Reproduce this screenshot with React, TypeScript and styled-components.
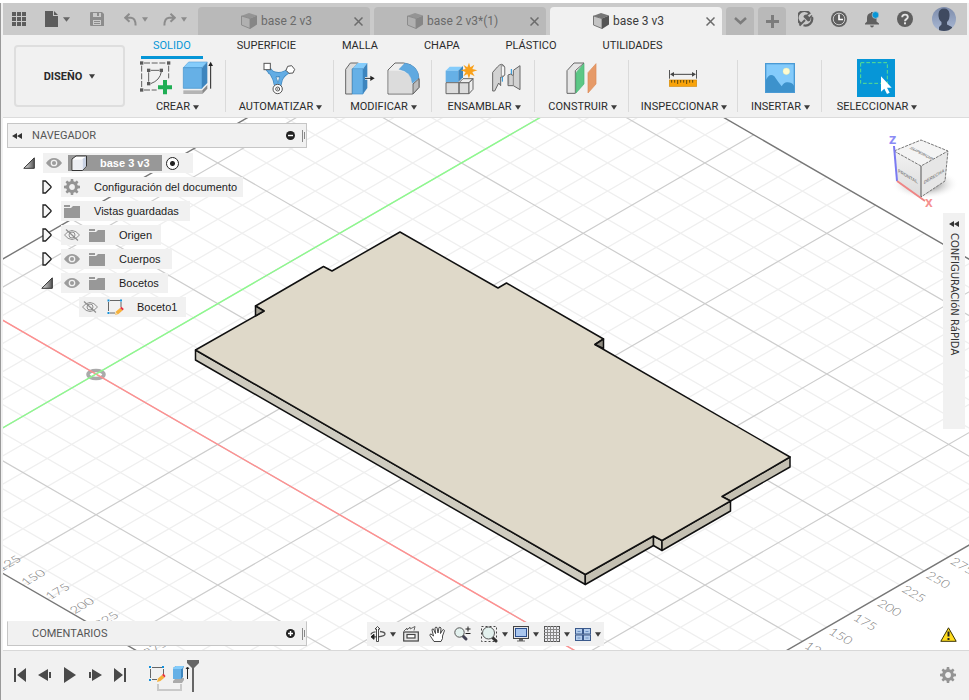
import React from "react";
import styled, { createGlobalStyle } from "styled-components";

const UI = `Roboto, "Liberation Sans", sans-serif`;
const TREE = `"Liberation Sans", Arial, sans-serif`;
const BLUE = "#0696d7";

const GlobalStyle = createGlobalStyle`
  * { box-sizing: border-box; }
  body { margin: 0; background: #fff; font-family: ${UI}; font-size: 11px; color: #2b2b2b; overflow: hidden; }
  button { font: inherit; color: inherit; background: none; border: 0; padding: 0; margin: 0; cursor: pointer; }
  svg { display: block; flex: none; }
`;

const Page = styled.div`
  display: flex;
  flex-direction: column;
  height: 100vh;
  padding-top: 3px;
  background: #fff;
`;
const Frame = styled.div`
  display: flex;
  flex-direction: column;
  flex: 1;
  min-height: 0;
  border-left: 1px solid #999;
  padding-left: 2px;
  background: #f1f1f1;
`;

/* ---------- Title bar ---------- */
const TitleBar = styled.header`
  display: flex;
  height: 32px;
  background: #cacaca;
  margin-right: 2px;
`;
const QuickTools = styled.div`
  display: flex;
  align-items: center;
  width: 195px;
  padding-left: 8px;
`;
const IconButton = styled.button<{ $w?: number; $ml?: number }>`
  display: flex;
  align-items: center;
  justify-content: center;
  gap: 5px;
  flex: none;
  width: ${(p) => (p.$w ? `${p.$w}px` : "auto")};
  margin-left: ${(p) => p.$ml ?? 0}px;
`;
const FileTabs = styled.div`
  display: flex;
  align-items: flex-end;
  gap: 4px;
`;
const FileTab = styled.div<{ $active?: boolean }>`
  display: flex;
  align-items: center;
  width: 172px;
  height: 28px;
  padding: 0 7px 0 43px;
  border-radius: 4px 4px 0 0;
  background: ${(p) => (p.$active ? "#f1f1f1" : "#b9b9b9")};
  color: ${(p) => (p.$active ? "#3c3c3c" : "#6a6a6a")};
  font-size: 12px;
`;
const TabTitle = styled.button<{ $wide?: boolean }>`
  display: flex;
  align-items: center;
  gap: 4px;
  margin-left: ${(p) => (p.$wide ? -10 : 0)}px;
  margin-right: auto;
  white-space: nowrap;
`;
const SquareButton = styled.button`
  display: flex;
  align-items: center;
  justify-content: center;
  width: 28px;
  height: 28px;
  border-radius: 4px 4px 0 0;
  background: #b9b9b9;
`;
const Account = styled.div`
  display: flex;
  align-items: center;
  gap: 17px;
  margin-left: auto;
  padding-right: 11px;
`;

/* ---------- Ribbon ---------- */
const Ribbon = styled.section`
  display: flex;
  flex: none;
  height: 83px;
  border-bottom: 1px solid #dcdcdc;
`;
const WorkspaceButton = styled.button`
  display: flex;
  align-items: center;
  justify-content: center;
  gap: 7px;
  flex: none;
  width: 111px;
  height: 62px;
  margin: 10px 3px 0 11px;
  border: 2px solid #dedede;
  border-radius: 4px;
  font-weight: 700;
`;
const RibbonBody = styled.div`
  flex: 1;
`;
const RibbonTabs = styled.nav`
  display: flex;
  gap: 22px;
  height: 24px;
  padding-left: 13px;
`;
const RibbonTab = styled.button<{ $active?: boolean }>`
  height: 24px;
  padding: 1px 12px 0;
  line-height: 20px;
  white-space: nowrap;
  color: ${(p) => (p.$active ? BLUE : "#2b2b2b")};
  border-bottom: 3px solid ${(p) => (p.$active ? BLUE : "transparent")};
`;
const Groups = styled.div`
  display: flex;
`;
const Group = styled.div<{ $w: number; $last?: boolean }>`
  display: flex;
  flex-direction: column;
  align-items: center;
  width: ${(p) => p.$w}px;
  height: 52px;
  margin-top: 1px;
  border-right: ${(p) => (p.$last ? "0" : "1px solid #dadada")};
`;
const GroupIcons = styled.div<{ $gap?: number }>`
  display: flex;
  align-items: center;
  justify-content: center;
  flex: none;
  gap: ${(p) => p.$gap ?? 10}px;
  height: 36px;
  button { display: flex; }
`;
const GroupLabel = styled.button`
  display: flex;
  align-items: center;
  flex: none;
  gap: 3px;
  height: 14px;
  margin-top: 4px;
  padding-left: 2px;
  line-height: 14px;
  white-space: nowrap;
`;

/* ---------- Viewport ---------- */
const Viewport = styled.main`
  position: relative;
  flex: 1;
  min-height: 0;
  display: flex;
  flex-direction: column;
  justify-content: space-between;
  overflow: hidden;
  background: #fff;
`;
const Scene = styled.svg`
  position: absolute;
  inset: 0;
  width: 100%;
  height: 100%;
`;
const Overlay = styled.div`
  position: relative;
  display: flex;
  align-items: flex-start;
`;
const BottomOverlay = styled(Overlay)`
  align-items: flex-end;
  padding: 0 12px 4px 4px;
`;
const Browser = styled.aside`
  width: 300px;
  margin: 5px 0 0 4px;
`;
const PanelBar = styled.div<{ $open?: boolean }>`
  display: flex;
  align-items: center;
  width: 300px;
  height: 25px;
  padding: 0 0 0 4px;
  background: #f1f1f1;
  border: 1px solid #c6c6c6;
  border-top-color: ${(p) => (p.$open ? "#c6c6c6" : "#f1f1f1")};
  color: #555;
`;
const PanelTitle = styled.h2`
  margin: 0 auto 0 8px;
  font-size: 11px;
  font-weight: 400;
`;
const CollapseSlot = styled.span`
  display: flex;
  width: 12px;
`;
const Tree = styled.ul`
  list-style: none;
  margin: 3px 0 0;
  padding: 0;
  font: 11px ${TREE};
`;
const TreeRow = styled.li<{ $indent: number }>`
  display: flex;
  align-items: center;
  height: 24px;
  padding-left: ${(p) => p.$indent}px;
`;
const Twisty = styled.button`
  display: flex;
  width: 20px;
`;
const NodeBox = styled.div<{ $pr: number }>`
  display: flex;
  align-items: center;
  height: 20px;
  padding: 0 ${(p) => p.$pr}px 0 2px;
  background: #f1f1f1;
  white-space: nowrap;
  color: #1c1c1c;
`;
const IconCell = styled.span<{ $tight?: boolean }>`
  display: flex;
  justify-content: center;
  width: 18px;
  margin-right: ${(p) => (p.$tight ? 5 : 7)}px;
`;
const NodeName = styled.span`
  margin-left: 6px;
`;
const RootName = styled.span`
  display: flex;
  align-items: center;
  gap: 13px;
  height: 16px;
  width: 94px;
  padding-left: 3px;
  background: #989898;
  color: #fff;
  font-weight: 700;
`;
const RootRadio = styled.input`
  appearance: none;
  width: 13px;
  height: 13px;
  margin: 0 0 0 4px;
  border: 1px solid #222;
  border-radius: 50%;
  background: radial-gradient(circle, #222 0 2px, #fff 3px);
`;
const TwistySlot = styled.span`
  display: flex;
  margin-left: 1px;
`;
const RightSide = styled.div`
  display: flex;
  flex-direction: column;
  align-items: flex-end;
  margin-left: auto;
  padding-top: 14px;
`;
const QuickSetup = styled.button`
  display: flex;
  align-items: center;
  gap: 6px;
  width: 22px;
  height: 216px;
  margin: 5px 4px 0 0;
  padding-top: 8px;
  background: #f1f1f1;
  flex-direction: column;
  color: #333;
`;
const VerticalText = styled.span`
  writing-mode: vertical-rl;
  font: 10px/14px "DejaVu Sans", sans-serif;
  white-space: nowrap;
`;
const NavBar = styled.div`
  display: flex;
  align-items: center;
  width: 237px;
  height: 24px;
  margin-left: 60px;
  padding-left: 2px;
  background: #f1f1f1;
`;
const NavTool = styled(IconButton)`
  gap: 4px;
`;
const Alert = styled.button`
  display: flex;
  margin: 0 0 4px auto;
`;

/* ---------- Timeline ---------- */
const Timeline = styled.footer`
  display: flex;
  align-items: flex-start;
  flex: none;
  height: 50px;
  padding: 8px 13px 0 9px;
  border-top: 1px solid #d8d8d8;
`;
const Playback = styled.div`
  display: flex;
  align-items: center;
  height: 32px;
  gap: 9px;
  button { display: flex; justify-content: center; width: 16px; }
`;
const Features = styled.div`
  margin-left: 20px;
`;
const SettingsButton = styled.button`
  display: flex;
  margin: 8px 0 0 auto;
`;

/* ---------- Icons ---------- */
const Caret = ({ w = 6, color = "#3c3c3c" }: { w?: number; color?: string }) => (
  <svg width={w} height="5" viewBox="0 0 6 5" preserveAspectRatio="none"><path d="M0 0.3H6L3 4.8Z" fill={color} /></svg>
);
const GridIcon = () => (
  <svg width="14" height="14" viewBox="0 0 14 14" fill="#5c5c5c">
    {[0, 5, 10].map((y) => [0, 5, 10].map((x) => <rect key={`${x}-${y}`} x={x} y={y} width="4" height="4" />))}
  </svg>
);
const FileIcon = () => (
  <svg width="13" height="16" viewBox="0 0 13 16" fill="#5c5c5c"><path d="M0 0H8V5H13V16H0Z" /><path d="M9 0L13 4H9Z" /></svg>
);
const SaveIcon = () => (
  <svg width="14" height="14" viewBox="0 0 14 14">
    <path d="M1 0H12L14 2V14H1Q0 14 0 13V1Q0 0 1 0Z" fill="#8c8c8c" />
    <path d="M3 1H11V5H3ZM3 8H11V13H3Z" fill="#cacaca" />
    <path d="M7 1H9V4H7ZM4 9H10V10H4ZM4 11H10V12H4Z" fill="#8c8c8c" />
  </svg>
);
const UndoIcon = ({ flip }: { flip?: boolean }) => (
  <svg width="13" height="13" viewBox="0 0 13 13" fill="none" stroke="#8c8c8c" strokeWidth="2">
    <g transform={flip ? "matrix(-1 0 0 1 13 0)" : undefined}>
      <path d="M5.5 0.8L1.2 4.8L5.5 8.8M1.5 4.8H7Q11.5 5 11.6 12.5" />
    </g>
  </svg>
);
const PartIcon = ({ active }: { active?: boolean }) => (
  <svg width="16" height="16" viewBox="0 0 16 16">
    <path d="M0 3L8 0L16 2.5L9 5.5Z" fill={active ? "#777" : "#949494"} />
    <path d="M0.5 3L9 5.5V15.5L0.5 12Z" fill={active ? "#c4c4c4" : "#b0b0b0"} stroke={active ? "#777" : "#8c8c8c"} />
    <path d="M9 5.5L16 2.5V11.5L9 16Z" fill={active ? "#555" : "#868686"} />
  </svg>
);
const CloseIcon = () => (
  <svg width="9" height="9" viewBox="0 0 9 9" stroke="#6c6c6c" strokeWidth="1.5"><path d="M0.5 0.5L8.5 8.5M8.5 0.5L0.5 8.5" /></svg>
);
const ExtensionsIcon = () => (
  <svg width="16" height="16" viewBox="0 0 16 16">
    <path d="M3.2 12.8A6.8 6.8 0 1 1 12 3M14 6A6.8 6.8 0 0 1 5.500 14.300" fill="none" stroke="#5f5f5f" strokeWidth="2.2" />
    <path d="M1.500 14.500L7 9" stroke="#5f5f5f" strokeWidth="2" />
    <path d="M5.5 6L10 10.500Q13 10 12.500 7L8.500 3.500Q5.500 3.500 5.500 6Z" fill="#5f5f5f" />
    <path d="M9 4.500L11.500 2M11.500 7L14 4.500" stroke="#5f5f5f" strokeWidth="1.500" />
  </svg>
);
const ClockIcon = () => (
  <svg width="16" height="16" viewBox="0 0 16 16">
    <circle cx="8" cy="8" r="8" fill="#5f5f5f" />
    <circle cx="8" cy="8" r="5.8" fill="none" stroke="#cacaca" />
    <path d="M8 3.5V8.5H12" fill="none" stroke="#fff" strokeWidth="1.6" />
  </svg>
);
const BellIcon = () => (
  <svg width="16" height="17" viewBox="0 0 16 17">
    <path d="M1 12.5L3 10.5V7Q3 2.5 7 2V1H9V2Q12.5 3 12.5 7V10.5L15 12.5V13.5H1ZM6 14.5H10Q9.5 16.5 8 16.5T6 14.5Z" fill="#5f5f5f" />
    <circle cx="11.5" cy="4" r="3.4" fill={BLUE} stroke="#cacaca" strokeWidth="0.6" />
  </svg>
);
const HelpIcon = () => (
  <svg width="16" height="16" viewBox="0 0 16 16">
    <circle cx="8" cy="8" r="8" fill="#5f5f5f" />
    <path d="M5.2 6.2Q5.2 3.6 8 3.6T10.8 6Q10.8 7.2 9.4 8.1Q8 9 8 10.2" fill="none" stroke="#e4e4e4" strokeWidth="1.9" />
    <rect x="7" y="11.3" width="2" height="2" fill="#e4e4e4" />
  </svg>
);
const Avatar = () => (
  <svg width="24" height="24" viewBox="0 0 24 24">
    <defs>
      <linearGradient id="av" x1="0" x2="0" y1="0" y2="1"><stop offset="0" stopColor="#7d8cab" /><stop offset="1" stopColor="#a9b8d4" /></linearGradient>
      <clipPath id="avc"><circle cx="12" cy="12" r="12" /></clipPath>
    </defs>
    <g clipPath="url(#avc)">
      <rect width="24" height="24" fill="url(#av)" />
      <path d="M6.500 7Q7 1.500 12 1.500T17.500 7Q18 12 15 15V17.500L20 20V24H7V20L9.500 17.500V15Q6 12 6.500 7Z" fill="#3f4a60" />
    </g>
  </svg>
);

/* Ribbon icons are drawn on a grid of three units per pixel. */
const SketchIcon = () => (
  <svg width="32" height="34" viewBox="0 0 96 102">
    <path d="M12 6H78M5 14V80M86 14V52M12 87H50" stroke="#5f5f5f" strokeWidth="3" strokeDasharray="18 5" fill="none" />
    <path d="M26 34V62M32 28H58M64 32Q60 58 32 68" stroke="#5f5f5f" strokeWidth="3" fill="none" />
    <g fill="#5a5a5a">
      {[[5, 6], [86, 6], [5, 87], [26, 28], [64, 28], [26, 68]].map(([x, y]) => <rect key={`${x}-${y}`} x={x - 5} y={y - 5} width="10" height="10" />)}
    </g>
    <path d="M69 57H81V73H96V85H81V100H69V85H54V73H69Z" fill="#1fae54" />
  </svg>
);
const ExtrudeIcon = () => (
  <svg width="31" height="34" viewBox="0 0 93 102">
    <path d="M4 88H61V99H4Z" fill="#b4b4b4" /><path d="M61 88L76 72V83L61 99Z" fill="#888" />
    <path d="M4 20L20 3H76L60 20Z" fill="#84ccfb" stroke="#5aa4dc" strokeWidth="2" />
    <path d="M4 20H60V82H4Z" fill="#66b0e6" stroke="#3f8fcb" strokeWidth="2" />
    <path d="M60 20L76 3V66L60 82Z" fill="#3d85be" />
    <path d="M86 10V83" stroke="#222" strokeWidth="3" /><path d="M86 2L93 15H79Z" fill="#222" />
  </svg>
);
const AutomateIcon = () => (
  <svg width="33" height="33" viewBox="0 0 99 99">
    <g fill="none" strokeLinecap="round">
      <path d="M14 20Q30 34 36 52L42 76M80 26Q60 34 52 52L46 76M22 30Q44 44 68 32" stroke="#3f86bd" strokeWidth="15" />
      <path d="M14 20Q30 34 36 52L42 76M80 26Q60 34 52 52L46 76M22 30Q44 44 68 32" stroke="#62ace4" strokeWidth="11" />
    </g>
    <path d="M39 45H50L45 62Z" fill="#f1f1f1" stroke="#3f86bd" strokeWidth="2" />
    <rect x="3" y="4" width="19" height="19" fill="#fff" stroke="#555" strokeWidth="3" />
    <path d="M74 13L86 11L95 22L90 33L78 34L69 25Z" fill="#fff" stroke="#555" strokeWidth="3" />
    <circle cx="44" cy="81" r="14" fill="#fff" stroke="#555" strokeWidth="3" /><circle cx="44" cy="81" r="6" fill="#fff" stroke="#555" strokeWidth="3" /><circle cx="44" cy="81" r="2" fill="#555" />
  </svg>
);
const PressPullIcon = () => (
  <svg width="30" height="33" viewBox="0 0 90 99">
    <path d="M2 22L16 3H40L22 22V96H2Z" fill="#dcdcdc" stroke="#666" strokeWidth="3" />
    <path d="M22 20L38 3H67L54 20Z" fill="#84ccfb" /><path d="M22 20H54V96H22Z" fill="#66b0e6" stroke="#3f8fcb" strokeWidth="2" /><path d="M54 20L67 3V78L54 96Z" fill="#3d85be" />
    <path d="M60 49H80" stroke="#fff" strokeWidth="8" /><path d="M60 49H80" stroke="#222" strokeWidth="3" /><path d="M76 41L89 49L76 57Z" fill="#222" />
  </svg>
);
const FilletIcon = () => (
  <svg width="33" height="33" viewBox="0 0 99 99">
    <path d="M3 24L24 3H50Q94 8 96 54V76L78 96H3Z" fill="#eee" stroke="#666" strokeWidth="3" />
    <path d="M5 26H32Q74 28 76 66V94H5Z" fill="#dcdcdc" />
    <path d="M36 22L54 3Q94 10 96 48L76 64Q72 28 36 22Z" fill="#5fa9e0" stroke="#4793cc" />
    <path d="M78 66L96 50V76L78 96Z" fill="#bcbcbc" stroke="#666" strokeWidth="3" />
  </svg>
);
const NewComponentIcon = () => (
  <svg width="33" height="33" viewBox="0 0 99 99">
    <path d="M3 62H42V95H3ZM42 62H72V95H42Z" fill="#dcdcdc" stroke="#666" strokeWidth="3" />
    <path d="M42 62L54 50H84L72 62ZM72 62L84 50V82L72 95Z" fill="#efefef" stroke="#666" strokeWidth="3" />
    <path d="M2 26L14 14H54L40 26Z" fill="#84ccfb" /><path d="M2 26H40V60H2Z" fill="#66b0e6" /><path d="M40 26L54 12V46L40 60Z" fill="#3d85be" />
    <path d="M72 2L76 16L88 8L82 21L97 25L82 30L89 43L76 36L72 50L67 36L55 43L62 30L47 25L62 21L55 8L67 16Z" fill="#f9a11b" />
  </svg>
);
const JointIcon = () => (
  <svg width="29" height="31" viewBox="0 0 87 93">
    <path d="M2 28L16 12Q30 -4 38 12V36Q34 44 26 42V68L20 60L8 84H2Z" fill="#d2d2d2" stroke="#666" strokeWidth="3" />
    <path d="M28 8Q36 6 38 14V36Q32 42 28 38Z" fill="#f5f5f5" stroke="#666" strokeWidth="2" />
    <path d="M31 42V56M58 18V38" stroke="#1c8fd6" strokeWidth="3" />
    <path d="M48 36Q56 30 64 38V22L84 8V80L64 68H48Z" fill="#d2d2d2" stroke="#666" strokeWidth="3" />
    <path d="M64 38V68M50 38V64" stroke="#888" strokeWidth="3" />
  </svg>
);
const PlaneIcon = () => (
  <svg width="31" height="33" viewBox="0 0 93 99">
    <path d="M3 26L24 3H54L28 26V94H3Z" fill="#e6e6e6" stroke="#666" strokeWidth="3" />
    <path d="M30 32L54 5V66L30 93Z" fill="#5cc785" stroke="#45b572" strokeWidth="2" />
    <path d="M66 32L90 5V66L66 93Z" fill="#e69a68" stroke="#dd8a55" strokeWidth="2" />
  </svg>
);
const MeasureIcon = () => (
  <svg width="28" height="17" viewBox="0 0 84 51">
    <path d="M1.5 0V26M82.5 0V26" stroke="#555" strokeWidth="3" /><path d="M10 13H74" stroke="#444" strokeWidth="3" />
    <path d="M3 13L15 6V20ZM81 13L69 6V20Z" fill="#444" />
    <rect x="1" y="30" width="82" height="19" fill="#f9a30a" stroke="#d48a08" strokeWidth="2" />
    <path d="M8 30V38M17 30V38M26 30V42M35 30V38M44 30V38M53 30V42M62 30V38M71 30V38" stroke="#5e4a10" strokeWidth="3" />
  </svg>
);
const InsertIcon = () => (
  <svg width="30" height="30" viewBox="0 0 90 90">
    <rect x="2" y="2" width="86" height="86" fill="#84cbfb" stroke="#4a9ad4" strokeWidth="4" />
    <circle cx="64" cy="25" r="10" fill="#fffbd0" stroke="#e8e9a8" />
    <path d="M3 50Q14 28 28 40Q40 58 50 70Q58 56 68 58Q80 58 87 68V87H3Z" fill="#3d92cc" />
  </svg>
);
const SelectIcon = () => (
  <svg width="38" height="38" viewBox="0 0 114 114">
    <rect width="114" height="114" fill="#0696d7" />
    <rect x="11" y="11" width="80" height="62" fill="none" stroke="#5be08c" strokeWidth="3" strokeDasharray="11 6" />
    <path d="M72 52V98L82 89L90 105L98 101L90 86H104Z" fill="#fff" />
  </svg>
);

const DoubleArrow = () => (
  <svg width="10" height="6" viewBox="0 0 10 6" fill="#333"><path d="M5 0V6L0 3ZM10 0V6L5 3Z" /></svg>
);
const RoundSign = ({ plus }: { plus?: boolean }) => (
  <svg width="9" height="9" viewBox="0 0 9 9"><circle cx="4.5" cy="4.5" r="4.5" fill="#222" /><path d={plus ? "M2 4.5H7M4.5 2V7" : "M2 4.5H7"} stroke="#fff" strokeWidth="1.4" /></svg>
);
const Grip = () => (
  <svg width="11" height="12" viewBox="0 0 11 12"><path d="M7.5 0V12M9.5 2V9" stroke="#888" /></svg>
);
const Closed = () => (
  <svg width="10" height="14" viewBox="0 0 10 14"><path d="M1 1V13H3.5L9 7.5V6.5L3.5 1Z" fill="#f6f6f6" stroke="#222" strokeWidth="1.3" /></svg>
);
const Opened = () => (
  <svg width="12" height="12" viewBox="0 0 12 12">
    <defs><linearGradient id="tw"><stop offset="0" stopColor="#eee" /><stop offset="1" stopColor="#555" /></linearGradient></defs>
    <path d="M11.3 0.8V11.3H0.8Z" fill="url(#tw)" stroke="#333" />
  </svg>
);
const Eye = () => (
  <svg width="16" height="12" viewBox="0 0 16 12"><path d="M0 6Q3.5 1 8 1T16 6Q12.5 11 8 11T0 6Z" fill="#9c9c9c" /><circle cx="8" cy="6" r="2.7" fill="none" stroke="#f1f1f1" strokeWidth="1.3" /></svg>
);
const EyeOff = () => (
  <svg width="16" height="12" viewBox="0 0 16 12" fill="none" stroke="#8f8f8f"><path d="M0.5 6Q4 1.5 8 1.5T15.5 6Q12 10.5 8 10.5T0.5 6Z" /><circle cx="8" cy="6" r="3" /><path d="M2 0.5L14 11.5" strokeWidth="1.2" /></svg>
);
const Folder = () => (
  <svg width="16" height="13" viewBox="0 0 16 13" fill="#989898"><path d="M0 0H6V2H0ZM0 3H7L9 1H16V13H0Z" /></svg>
);
const Gear = () => (
  <svg width="16" height="16" viewBox="0 0 16 16">
    <g fill="#949494">{[0, 45, 90, 135, 180, 225, 270, 315].map((a) => <path key={a} d="M6.3 4L6.8 0H9.2L9.7 4Z" transform={`rotate(${a} 8 8)`} />)}</g>
    <circle cx="8" cy="8" r="4.4" fill="none" stroke="#949494" strokeWidth="3" />
  </svg>
);
const CubeIcon = () => (
  <svg width="16" height="16" viewBox="0 0 16 16" stroke="#333" strokeLinejoin="round">
    <path d="M1 4L5 1H15.5V11L11.5 15.5H1Z" fill="#fff" /><path d="M11.5 4L15 1.5V11L11.5 15Z" fill="#c9d2e4" stroke="none" /><path d="M1.8 4.6H11.2V14.8H1.8Z" fill="#eceef3" stroke="none" />
  </svg>
);
const SketchNode = () => (
  <svg width="17" height="17" viewBox="0 0 17 17">
    <path d="M3 1.5H13M1.5 3V12M14 3V8M3 14H8" stroke="#666" fill="none" />
    <g fill="#1491dc"><rect x="0.500" y="0.500" width="2" height="2" /><rect x="13" y="0.500" width="2" height="2" /><rect x="0.500" y="13" width="2" height="2" /></g>
    <path d="M8 16L9 12.5L13 9L15.5 11.5L11.5 15Z" fill="#f6b23c" /><path d="M13 9L14.5 7.8L16.8 10L15.5 11.5Z" fill="#e8323c" /><path d="M8 16L9 13.5L10.5 15Z" fill="#eed9b0" />
  </svg>
);

const OrbitIcon = () => (
  <svg width="16" height="16" viewBox="0 0 16 16" fill="none" stroke="#222"><path d="M10 5.500Q15 6 15 8T8 10.800H3M5.500 5.800Q1 6.500 1 8.500" strokeWidth="1.300" stroke="#555" /><path d="M6.500 15.500V3H5L7.500 0.500L10 3H8.500V15.500Z" fill="#fff" strokeWidth="0.800" /><path d="M4 8.300L1 10.800L4 13.300Z" fill="#222" /></svg>
);
const LookAtIcon = () => (
  <svg width="16" height="16" viewBox="0 0 16 16" fill="none" stroke="#444"><rect x="0.700" y="6" width="14.600" height="9" fill="#e8e8e8" strokeWidth="1.200" /><rect x="4" y="8.500" width="8" height="3.500" fill="#fff" strokeWidth="1.200" /><path d="M1 5L4 2V4L7 1V3L12 0.500L11 4.500" stroke="#666" /></svg>
);
const HandIcon = () => (
  <svg width="17" height="17" viewBox="0 0 17 17"><path d="M5 15.500L1 9.500Q0.500 8 2 8L4.500 10L3 4Q3 2.500 4.500 3L6.500 7.500L6 2Q6.500 0.500 8 1.500L9 7L10 1.500Q11 0.500 12 2L11.500 7.500L13.500 4Q15 3 15.500 4.500L13.500 10V12.500L12 15.500Z" fill="#fff" stroke="#333" strokeWidth="0.900" strokeLinejoin="round" /></svg>
);
const ZoomIcon = () => (
  <svg width="17" height="16" viewBox="0 0 17 16"><path d="M8.500 9.500L12 13" stroke="#445" strokeWidth="3" strokeLinecap="round" /><circle cx="5.500" cy="6.500" r="4.700" fill="#e3f1ee" stroke="#555" /><path d="M14 0.500V5.500M11.500 3H16.500M11.500 7.500H16.500" stroke="#222" /></svg>
);
const ZoomWindowIcon = () => (
  <svg width="17" height="17" viewBox="0 0 17 17"><rect x="0.500" y="0.500" width="15" height="15" fill="none" stroke="#444" strokeDasharray="2 2" /><path d="M11.500 11.500L15 15" stroke="#333" strokeWidth="3" strokeLinecap="round" /><circle cx="7.500" cy="7" r="6" fill="#e3f1ee" stroke="#555" /></svg>
);
const DisplayIcon = () => (
  <svg width="16" height="16" viewBox="0 0 16 16"><rect x="0.500" y="0.500" width="15" height="12" fill="#e8e8e8" stroke="#444" /><rect x="2.500" y="2.500" width="11" height="8" fill="#a9c6ee" stroke="#2b4f8f" /><path d="M6 13H10V14.500H12V15.500H4V14.500H6Z" fill="#666" /></svg>
);
const GridSetIcon = () => (
  <svg width="16" height="16" viewBox="0 0 16 16"><rect x="0.500" y="0.500" width="15" height="15" fill="#ececf0" stroke="#555" /><path d="M3.500 0V16M6.500 0V16M9.500 0V16M12.500 0V16M0 3.500H16M0 6.500H16M0 9.500H16M0 12.500H16" stroke="#888" /></svg>
);
const ViewsIcon = () => (
  <svg width="16" height="13" viewBox="0 0 16 13" fill="#b4cdec" stroke="#3b5a8c"><rect x="0.500" y="0.500" width="7" height="5.500" /><rect x="8.500" y="0.500" width="7" height="5.500" /><rect x="0.500" y="7" width="7" height="5.500" /><rect x="8.500" y="7" width="7" height="5.500" /><path d="M2.500 3.500H5.500M10.500 3.500H13.500M2.500 10H5.500M10.500 10H13.500" stroke="#6f93c4" /></svg>
);
const WarningIcon = () => (
  <svg width="17" height="15" viewBox="0 0 17 15"><path d="M8.500 0.800L16.200 14.300H0.800Z" fill="#ffdc1e" stroke="#3a3200" strokeLinejoin="round" /><path d="M8.500 4.500V9.500M8.500 11V13" stroke="#222" strokeWidth="2" /></svg>
);

const playbackPaths: [string, string][] = [
  ["Inicio", "M2 1H4V15H2ZM14 1V15L5 8Z"],
  ["Anterior", "M11 2V14L1 8ZM12 5H14V11H12Z"],
  ["Reproducir", "M2 0V16L14 8Z"],
  ["Siguiente", "M5 2V14L15 8ZM2 5H4V11H2Z"],
  ["Final", "M2 1V15L11 8ZM12 1H14V15H12Z"],
];

const TimelineFeatures = () => (
  <svg width="52" height="34" viewBox="0 0 52 34">
    <path d="M4 8.500H14M2.500 10V19M15.500 10V15M4 20.500H9" stroke="#666" fill="none" />
    <g fill="#1491dc"><rect x="1" y="7" width="2" height="2" /><rect x="14" y="7" width="2" height="2" /><rect x="1" y="20" width="2" height="2" /></g>
    <path d="M9 23L10 19.500L14 16L16.500 18.500L12.500 22Z" fill="#f6b23c" /><path d="M14 16L15.500 14.500L17.500 17L16.500 18.500Z" fill="#e8323c" />
    <path d="M25 22L28 19H36V21L34 24H25Z" fill="#aaa" />
    <path d="M25 9L28 7H36L35 10V18L33 20H25Z" fill="#3d85be" /><path d="M25 9L28 7H36L34 10H25Z" fill="#84ccfb" /><path d="M25 10H33V20H25Z" fill="#66b0e6" />
    <path d="M39.500 9V20M38 10L39.500 8L41 10" stroke="#222" fill="none" />
    <path d="M10 25V31H33V25" stroke="#c9c9c9" strokeWidth="2" fill="none" />
    <path d="M39 1H51V4L46 9V33H44V9L39 4Z" fill="#666" />
  </svg>
);

const ViewCube = () => (
  <svg width="84" height="76" viewBox="0 0 84 76">
    <defs>
      <radialGradient id="sh"><stop offset="0.4" stopColor="#888" stopOpacity="0.6" /><stop offset="1" stopColor="#fff" stopOpacity="0" /></radialGradient>
      <linearGradient id="cl" x1="0" x2="0" y1="0" y2="1"><stop offset="0" stopColor="#f2f2f2" /><stop offset="1" stopColor="#dcdcdc" /></linearGradient>
    </defs>
    <ellipse cx="40" cy="52" rx="34" ry="15" fill="url(#sh)" />
    <path d="M9 19L36 8L63 19L36 34Z" fill="#f4f4f4" />
    <path d="M9 19L36 34V65L12 49Z" fill="url(#cl)" /><path d="M36 34L63 19L60 49L36 65Z" fill="#e6e6e6" />
    <path d="M9 19L36 8L63 19L60 49L36 65M9 19L36 34L63 19" fill="none" stroke="#777" strokeDasharray="3 1" />
    <path d="M36 34V65" stroke="#555" />
    <path d="M9 14L12 49" stroke="#7a7af2" strokeWidth="2" /><path d="M12 49L40 69" stroke="#ef8585" strokeWidth="2" />
    <g fill="#888" fontFamily="Liberation Sans, sans-serif" fontSize="5" fontWeight="700" textAnchor="middle">
      <text transform="matrix(.84 .5 .05 1 23 46)">FRONTAL</text>
      <text transform="matrix(.84 -.5 -.05 1 49 46)">DERECHA</text>
      <text transform="matrix(.84 .45 -.8 .4 35 22)">SUPERIOR</text>
    </g>
    <g fontFamily="DejaVu Sans, sans-serif" fontSize="10" fontWeight="700"><text x="4" y="12" fill="#8b8bf5">Z</text><text x="40" y="75" fill="#f59090">X</text></g>
  </svg>
);

/* ---------- 3D scene ---------- */
const ORIGIN = [96, 374];
const STEP = [24.36, 14.07];
const iso = (r: number, g: number) => [ORIGIN[0] + STEP[0] * (r + g), ORIGIN[1] + STEP[1] * (r - g)];
const R = [-6, 24];
const G = [-9, 22];
const segment = (a: number[], b: number[]) => `M${a[0].toFixed(1)} ${a[1].toFixed(1)}L${b[0].toFixed(1)} ${b[1].toFixed(1)}`;
const range = (a: number, b: number) => Array.from({ length: b - a + 1 }, (_, i) => a + i);
const lines = (major: boolean) =>
  [
    ...range(R[0] + 1, R[1] - 1).filter((r) => (r % 5 === 0) === major).map((r) => segment(iso(r, G[0]), iso(r, G[1]))),
    ...range(G[0] + 1, G[1] - 1).filter((g) => (g % 5 === 0) === major).map((g) => segment(iso(R[0], g), iso(R[1], g))),
  ].join("");
const border = `M${[iso(R[0], G[0]), iso(R[1], G[0]), iso(R[1], G[1]), iso(R[0], G[1])].map((p) => p.join(" ")).join("L")}Z`;
const outline =
  "M400 232L498 288L506.500 283L603.500 339L595 344.500L790 457L722 496.500L730.500 501L662 540.500L653.500 536L585.300 574.500L195.500 350L264 311L255.500 306L323.500 266.500L332 271Z";

const Model = () => (
  <Scene viewBox="3 118 966 532" preserveAspectRatio="xMidYMid slice" role="img" aria-label="base 3 v3">
    <path d={lines(false)} stroke="#efefef" strokeWidth="1.300" fill="none" />
    <path d={lines(true)} stroke="#cdcdcd" strokeWidth="1.200" fill="none" />
    <path d={border} stroke="#777" strokeWidth="1.400" fill="none" />
    <ellipse cx="96" cy="374.500" rx="8" ry="4" fill="none" stroke="#aaa" strokeWidth="3.500" />
    <path d={segment(iso(R[0], 0), iso(R[1], 0))} stroke="#ff8f8f" strokeWidth="1.400" />
    <path d={segment(iso(0, G[0]), iso(0, G[1]))} stroke="#8dfa8d" strokeWidth="1.400" />
    <g fill="#808080" fontFamily="Lato, sans-serif" fontSize="15" fontWeight="300">
      {range(5, 11).map((n) => {
        const [x, y] = iso(n, G[0]);
        return <text key={n} transform={`matrix(.8 -.46 .6 .5 ${x + 3} ${y + 1})`}>{n * 25}</text>;
      })}
      {range(5, 11).map((n) => {
        const [x, y] = iso(R[1], n);
        return <text key={n} transform={`matrix(.8 .46 -.5 .6 ${x + 1} ${y + 6})`}>{n * 25}</text>;
      })}
    </g>
    <g stroke="#111" strokeWidth="1.500" strokeLinejoin="round">
      <path d="M195.500 350L585.300 574.500V584.500L195.500 360Z" fill="#cfccc0" />
      <path d="M585.300 574.500L653.500 536V545.500L585.300 584.500Z" fill="#c4c0b2" />
      <path d="M653.500 536L662 540.500V550.500L653.500 545.500Z" fill="#d6d3c7" />
      <path d="M662 540.500L730.500 501V511L662 550.500Z" fill="#c4c0b2" />
      <path d="M722 496.500L790 457V467L730.500 501Z" fill="#c4c0b2" />
      <path d={outline} fill="#dfd9c9" />
      <path d="M255.500 306L264 311L255.500 316Z" fill="#a39f92" /><path d="M603.500 339V348.500L595 344.500Z" fill="#8f8b80" />
    </g>
  </Scene>
);

/* ---------- Data ---------- */
const fileTabs = [{ name: "base 2 v3" }, { name: "base 2 v3*(1)", wide: true }, { name: "base 3 v3", active: true }];
const ribbonTabs = ["SOLIDO", "SUPERFICIE", "MALLA", "CHAPA", "PLÁSTICO", "UTILIDADES"];
const groups: { name: string; w: number; gap?: number; icons: React.FC[] }[] = [
  { name: "CREAR", w: 98, icons: [SketchIcon, ExtrudeIcon] },
  { name: "AUTOMATIZAR", w: 108, icons: [AutomateIcon] },
  { name: "MODIFICAR", w: 98, gap: 12, icons: [PressPullIcon, FilletIcon] },
  { name: "ENSAMBLAR", w: 103, gap: 14, icons: [NewComponentIcon, JointIcon] },
  { name: "CONSTRUIR", w: 94, icons: [PlaneIcon] },
  { name: "INSPECCIONAR", w: 109, icons: [MeasureIcon] },
  { name: "INSERTAR", w: 84, icons: [InsertIcon] },
  { name: "SELECCIONAR", w: 108, icons: [SelectIcon] },
];
const treeRows: { name: string; indent: number; open?: boolean; leaf?: boolean; pr: number; icons: React.FC[] }[] = [
  { name: "Configuración del documento", indent: 34, pr: 6, icons: [Gear] },
  { name: "Vistas guardadas", indent: 34, pr: 11, icons: [Folder] },
  { name: "Origen", indent: 34, pr: 9, icons: [EyeOff, Folder] },
  { name: "Cuerpos", indent: 34, pr: 11, icons: [Eye, Folder] },
  { name: "Bocetos", indent: 34, open: true, pr: 9, icons: [Eye, Folder] },
  { name: "Boceto1", indent: 72, leaf: true, pr: 9, icons: [EyeOff, SketchNode] },
];
const navTools: { label: string; icon: React.FC; w: number; caret?: boolean }[] = [
  { label: "Orbitar", icon: OrbitIcon, w: 28, caret: true },
  { label: "Mirar a", icon: LookAtIcon, w: 28 },
  { label: "Encuadre", icon: HandIcon, w: 25 },
  { label: "Zoom", icon: ZoomIcon, w: 25 },
  { label: "Ventana de zoom", icon: ZoomWindowIcon, w: 38, caret: true },
  { label: "Visualización", icon: DisplayIcon, w: 26, caret: true },
  { label: "Rejilla", icon: GridSetIcon, w: 36, caret: true },
  { label: "Vistas", icon: ViewsIcon, w: 26, caret: true },
];

export default function App() {
  return (
    <>
      <GlobalStyle />
      <Page>
        <Frame>
          <TitleBar>
            <QuickTools>
              <IconButton $w={16} aria-label="Panel de datos"><GridIcon /></IconButton>
              <IconButton $ml={18} aria-label="Archivo"><FileIcon /><Caret w={7} color="#666" /></IconButton>
              <IconButton $ml={20} aria-label="Guardar"><SaveIcon /></IconButton>
              <IconButton $ml={20} aria-label="Deshacer"><UndoIcon /><Caret color="#8c8c8c" /></IconButton>
              <IconButton $ml={15} aria-label="Rehacer"><UndoIcon flip /><Caret color="#8c8c8c" /></IconButton>
            </QuickTools>
            <FileTabs>
              {fileTabs.map((t) => (
                <FileTab key={t.name} $active={t.active}>
                  <TabTitle $wide={t.wide}><PartIcon active={t.active} />{t.name}</TabTitle>
                  <IconButton aria-label={`Cerrar ${t.name}`}><CloseIcon /></IconButton>
                </FileTab>
              ))}
              <SquareButton aria-label="Lista de pestañas">
                <svg width="13" height="8" viewBox="0 0 13 8" fill="none" stroke="#7c7c7c" strokeWidth="2.500"><path d="M1 1L6.500 6L12 1" /></svg>
              </SquareButton>
              <SquareButton aria-label="Nueva pestaña">
                <svg width="13" height="13" viewBox="0 0 13 13" stroke="#7c7c7c" strokeWidth="3"><path d="M6.500 0V13M0 6.500H13" /></svg>
              </SquareButton>
            </FileTabs>
            <Account>
              <IconButton aria-label="Extensiones"><ExtensionsIcon /></IconButton>
              <IconButton aria-label="Estado"><ClockIcon /></IconButton>
              <IconButton aria-label="Notificaciones"><BellIcon /></IconButton>
              <IconButton aria-label="Ayuda"><HelpIcon /></IconButton>
              <IconButton $ml={2} aria-label="Cuenta"><Avatar /></IconButton>
            </Account>
          </TitleBar>

          <Ribbon>
            <WorkspaceButton>DISEÑO <Caret /></WorkspaceButton>
            <RibbonBody>
              <RibbonTabs>
                {ribbonTabs.map((t, i) => <RibbonTab key={t} $active={i === 0}>{t}</RibbonTab>)}
              </RibbonTabs>
              <Groups>
                {groups.map((g, i) => (
                  <Group key={g.name} $w={g.w} $last={i === groups.length - 1}>
                    <GroupIcons $gap={g.gap}>
                      {g.icons.map((I, k) => <button key={k} aria-label={`${g.name} ${k + 1}`}><I /></button>)}
                    </GroupIcons>
                    <GroupLabel>{g.name}<Caret /></GroupLabel>
                  </Group>
                ))}
              </Groups>
            </RibbonBody>
          </Ribbon>

          <Viewport>
            <Model />
            <Overlay>
              <Browser>
                <PanelBar $open>
                  <CollapseSlot><DoubleArrow /></CollapseSlot>
                  <PanelTitle>NAVEGADOR</PanelTitle>
                  <IconButton aria-label="Contraer navegador"><RoundSign /></IconButton>
                  <Grip />
                </PanelBar>
                <Tree>
                  <TreeRow $indent={16}>
                    <Twisty aria-label="Contraer base 3 v3"><Opened /></Twisty>
                    <NodeBox $pr={14}>
                      <IconCell $tight><Eye /></IconCell>
                      <RootName><CubeIcon />base 3 v3</RootName>
                      <RootRadio type="radio" name="active-component" defaultChecked aria-label="Activar base 3 v3" />
                    </NodeBox>
                  </TreeRow>
                  {treeRows.map((r) => (
                    <TreeRow key={r.name} $indent={r.indent}>
                      {!r.leaf && (
                        <Twisty aria-label={r.name}>
                          {r.open ? <Opened /> : <TwistySlot><Closed /></TwistySlot>}
                        </Twisty>
                      )}
                      <NodeBox $pr={r.pr}>
                        {r.icons.map((I, k) => <IconCell key={k}><I /></IconCell>)}
                        <NodeName>{r.name}</NodeName>
                      </NodeBox>
                    </TreeRow>
                  ))}
                </Tree>
              </Browser>
              <RightSide>
                <ViewCube />
                <QuickSetup>
                  <DoubleArrow />
                  <VerticalText>CONFIGURACIóN RáPIDA</VerticalText>
                </QuickSetup>
              </RightSide>
            </Overlay>
            <BottomOverlay>
              <PanelBar>
                <CollapseSlot />
                <PanelTitle>COMENTARIOS</PanelTitle>
                <IconButton aria-label="Expandir comentarios"><RoundSign plus /></IconButton>
                <Grip />
              </PanelBar>
              <NavBar>
                {navTools.map(({ label, icon: I, w, caret }) => (
                  <NavTool key={label} $w={w} aria-label={label}><I />{caret && <Caret />}</NavTool>
                ))}
              </NavBar>
              <Alert aria-label="Advertencia"><WarningIcon /></Alert>
            </BottomOverlay>
          </Viewport>

          <Timeline>
            <Playback>
              {playbackPaths.map(([label, d]) => (
                <button key={label} aria-label={label}><svg width="16" height="16" viewBox="0 0 16 16" fill="#4a4a4a"><path d={d} /></svg></button>
              ))}
            </Playback>
            <Features><TimelineFeatures /></Features>
            <SettingsButton aria-label="Preferencias"><Gear /></SettingsButton>
          </Timeline>
        </Frame>
      </Page>
    </>
  );
}
